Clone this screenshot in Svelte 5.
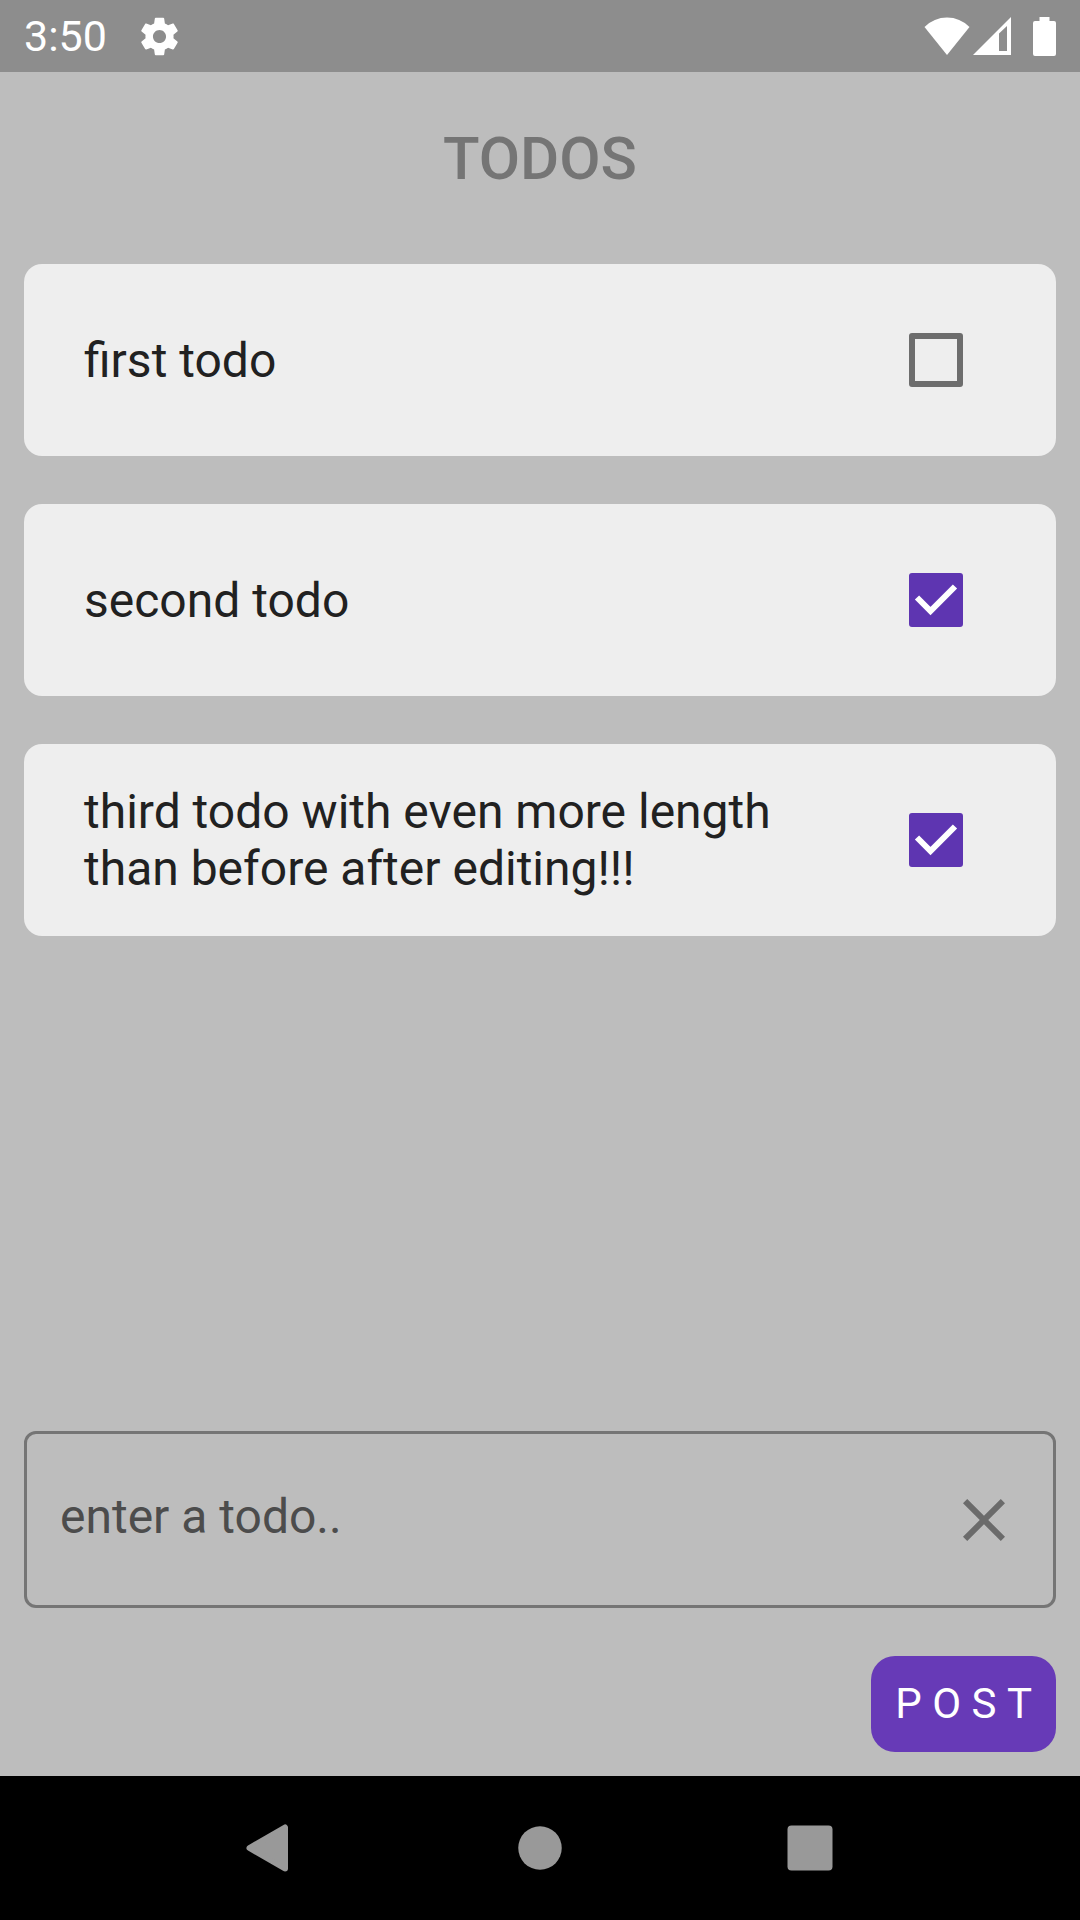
<script>
  let todos = $state([
    { id: 1, text: 'first todo', done: false },
    { id: 2, text: 'second todo', done: true },
    { id: 3, text: 'third todo with even more length than before after editing!!!', done: true },
  ]);
  let draft = $state('');

  function post() {
    const text = draft.trim();
    if (!text) return;
    todos.push({ id: todos.length + 1, text, done: false });
    draft = '';
  }
</script>

<svelte:head><title>Todos</title></svelte:head>

<div class="screen">
  <div class="status">
    <span class="time">3:50</span>
    <svg class="gear" viewBox="0 0 24 24" aria-hidden="true">
      <path
        fill="currentColor"
        d="M19.43 12.98c.04-.32.07-.64.07-.98s-.03-.66-.07-.98l2.11-1.65c.19-.15.24-.42.12-.64l-2-3.46c-.12-.22-.39-.3-.61-.22l-2.49 1c-.52-.4-1.08-.73-1.69-.98l-.38-2.65C14.46 2.18 14.250 2 14 2h-4c-.25 0-.46.18-.49.42l-.38 2.650c-.61.25-1.170.59-1.690.98l-2.490-1c-.23-.09-.49 0-.61.22l-2 3.460c-.13.22-.07.49.12.64l2.110 1.650c-.04.32-.07.65-.07.98s.03.66.07.98l-2.110 1.650c-.19.15-.24.42-.12.64l2 3.460c.12.22.39.3.61.22l2.490-1c.52.4 1.080.73 1.690.98l.38 2.650c.03.24.24.42.49.42h4c.25 0 .46-.18.49-.42l.38-2.650c.61-.25 1.170-.59 1.690-.98l2.490 1c.23.09.49 0 .61-.22l2-3.460c.12-.22.07-.49-.12-.64l-2.110-1.650zM12 15.500c-1.930 0-3.500-1.570-3.500-3.500s1.570-3.500 3.500-3.500 3.500 1.570 3.500 3.500-1.570 3.500-3.500 3.500z"
      />
    </svg>
    <span class="spacer"></span>
    <svg class="wifi" viewBox="0 0 46 38" aria-hidden="true">
      <path fill="currentColor" d="M0.5 10Q10 .5 23 .5T45.500 10L23 38z" />
    </svg>
    <svg class="signal" viewBox="0 0 38 38" aria-hidden="true">
      <path fill="currentColor" fill-rule="evenodd" d="M38 0v38H0zM26 16.500V34h8V9z" />
    </svg>
    <svg class="battery" viewBox="0 0 23 39" aria-hidden="true">
      <path
        fill="currentColor"
        d="M6.500 0h10v4H21a2 2 0 0 1 2 2v31a2 2 0 0 1-2 2H2a2 2 0 0 1-2-2V6a2 2 0 0 1 2-2h4.500z"
      />
    </svg>
  </div>

  <main>
    <h1>TODOS</h1>

    <ul>
      {#each todos as todo (todo.id)}
        <li>
          <label for="todo-{todo.id}">{todo.text}</label>
          <span class="check">
            <input id="todo-{todo.id}" type="checkbox" bind:checked={todo.done} />
            <svg viewBox="0 0 54 54" aria-hidden="true">
              <path d="M8 24.500 21.500 38 46 13.500" fill="none" stroke="#fff" stroke-width="6" />
            </svg>
          </span>
        </li>
      {/each}
    </ul>

    <form onsubmit={(e) => { e.preventDefault(); post(); }}>
      <div class="field">
        <input type="text" aria-label="Todo" placeholder="enter a todo.." bind:value={draft} />
        <button type="button" class="clear" aria-label="Clear" onclick={() => (draft = '')}>
          <svg viewBox="0 0 24 24" aria-hidden="true">
            <path
              fill="currentColor"
              d="M19 6.410 17.590 5 12 10.590 6.410 5 5 6.410 10.590 12 5 17.590 6.410 19 12 13.410 17.590 19 19 17.590 13.410 12z"
            />
          </svg>
        </button>
      </div>
      <button type="submit" class="post">P O S T</button>
    </form>
  </main>

  <nav>
    <button type="button" aria-label="Back">
      <svg viewBox="0 0 54 54" aria-hidden="true">
        <path
          fill="currentColor"
          stroke="currentColor"
          stroke-width="6"
          stroke-linejoin="round"
          d="M42 6.500v41L6.500 27z"
        />
      </svg>
    </button>
    <button type="button" aria-label="Home">
      <svg viewBox="0 0 54 54" aria-hidden="true"><circle cx="27" cy="27" r="21.750" fill="currentColor" /></svg>
    </button>
    <button type="button" aria-label="Recent apps">
      <svg viewBox="0 0 54 54" aria-hidden="true">
        <rect x="4.500" y="4.500" width="45" height="45" rx="4" fill="currentColor" />
      </svg>
    </button>
  </nav>
</div>

<style>
  .screen {
    display: flex;
    flex-direction: column;
    min-height: 100vh;
    background: #bdbdbd;
    font-family: Roboto, sans-serif;
    font-size: 48px;
    line-height: 57px;
    color: #212121;
  }

  button,
  input {
    margin: 0;
    padding: 0;
    border: 0;
    background: none;
    font: inherit;
    color: inherit;
  }

  svg {
    display: block;
  }

  .status {
    display: flex;
    align-items: center;
    height: 72px;
    padding: 0 24px;
    background: #8d8d8d;
    color: #fff;
  }

  .time {
    font-size: 43px;
    line-height: 72px;
  }

  .gear {
    width: 45px;
    height: 45px;
    margin-left: 30px;
  }

  .spacer {
    flex: 1;
  }

  .wifi {
    width: 46px;
    height: 38px;
  }

  .signal {
    width: 38px;
    height: 38px;
    margin: 0 22px 0 3px;
  }

  .battery {
    width: 23px;
    height: 39px;
  }

  main {
    flex: 1;
    display: flex;
    flex-direction: column;
    padding: 51px 24px 24px;
  }

  h1 {
    margin: 0 0 69px;
    font-size: 60px;
    font-weight: 500;
    line-height: 72px;
    text-align: center;
    color: #757575;
  }

  ul {
    flex: 1;
    display: flex;
    flex-direction: column;
    gap: 48px;
    margin: 0 0 48px;
    padding: 0;
    list-style: none;
  }

  li {
    display: flex;
    align-items: center;
    min-height: 192px;
    box-sizing: border-box;
    padding: 24px 48px 24px 60px;
    border-radius: 18px;
    background: #eee;
  }

  label {
    flex: 1;
  }

  .check {
    display: grid;
    place-items: center;
    width: 144px;
  }

  .check > * {
    grid-area: 1 / 1;
    width: 54px;
    height: 54px;
  }

  .check input {
    appearance: none;
    box-sizing: border-box;
    border: 6px solid #6d6d6d;
    border-radius: 3px;
  }

  .check input:checked {
    border-color: #5e35b1;
    background: #5e35b1;
  }

  .check svg {
    visibility: hidden;
    pointer-events: none;
  }

  .check input:checked + svg {
    visibility: visible;
  }

  form {
    display: flex;
    flex-direction: column;
    gap: 48px;
  }

  .field {
    display: flex;
    align-items: center;
    min-height: 171px;
    padding: 0 33px;
    border: 3px solid #757575;
    border-radius: 12px;
  }

  .field input {
    flex: 1;
    min-width: 0;
    height: 57px;
    padding-bottom: 6px;
    outline: none;
  }

  .field input::placeholder {
    color: #4c4c4c;
    opacity: 1;
  }

  .clear,
  .clear svg {
    width: 72px;
    height: 72px;
    color: #6b6b6b;
  }

  .post {
    align-self: flex-end;
    padding: 24px;
    border-radius: 24px;
    background: #673ab7;
    color: #fff;
    font-size: 42px;
    font-kerning: none;
    line-height: 48px;
  }

  nav {
    display: grid;
    grid-template-columns: repeat(3, 1fr);
    height: 144px;
    padding: 0 12.5%;
    background: #000;
    color: #999;
  }

  nav button {
    display: grid;
    place-items: center;
  }

  nav svg {
    width: 54px;
    height: 54px;
  }
</style>
